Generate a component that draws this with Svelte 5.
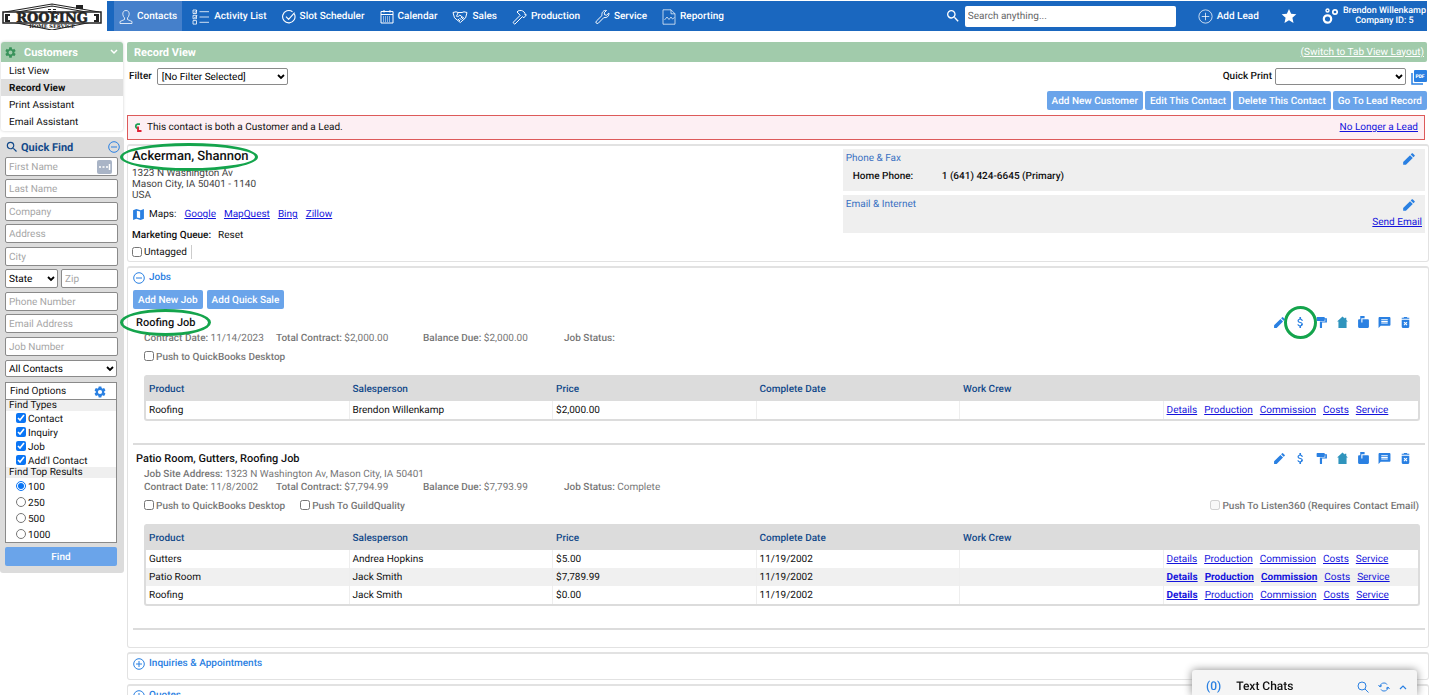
<script>
  const nav = [
    { id: 'contacts', label: 'Contacts', w: 14 },
    { id: 'activity', label: 'Activity List', w: 18 },
    { id: 'slot', label: 'Slot Scheduler', w: 14 },
    { id: 'calendar', label: 'Calendar', w: 14 },
    { id: 'sales', label: 'Sales', w: 16 },
    { id: 'production', label: 'Production', w: 15 },
    { id: 'service', label: 'Service', w: 15 },
    { id: 'reporting', label: 'Reporting', w: 14 },
  ]
  const menu = ['List View', 'Record View', 'Print Assistant', 'Email Assistant']
  const types = ['Contact', 'Inquiry', 'Job', "Add'l Contact"]
  const limits = ['100', '250', '500', '1000']
  const actions = ['Add New Customer', 'Edit This Contact', 'Delete This Contact', 'Go To Lead Record']
  const maps = ['Google', 'MapQuest', 'Bing', 'Zillow']
  const columns = ['Product', 'Salesperson', 'Price', 'Complete Date', 'Work Crew', '']
  const rowLinks = ['Details', 'Production', 'Commission', 'Costs', 'Service']
  const tools = ['edit', 'dollar', 'paint', 'house', 'mailbox', 'message', 'trash']

  const jobs = [
    {
      title: 'Roofing Job',
      address: '',
      meta: [['Contract Date', '11/14/2023'], ['Total Contract', '$2,000.00'], ['Balance Due', '$2,000.00'], ['Job Status', '']],
      pushes: ['Push to QuickBooks Desktop'],
      listen: false,
      marked: true,
      rows: [
        { cells: ['Roofing', 'Brendon Willenkamp', '$2,000.00', '', ''], strong: 0 },
      ],
    },
    {
      title: 'Patio Room, Gutters, Roofing Job',
      address: '1323 N Washington Av, Mason City, IA 50401',
      meta: [['Contract Date', '11/8/2002'], ['Total Contract', '$7,794.99'], ['Balance Due', '$7,793.99'], ['Job Status', 'Complete']],
      pushes: ['Push to QuickBooks Desktop', 'Push To GuildQuality'],
      listen: true,
      marked: false,
      rows: [
        { cells: ['Gutters', 'Andrea Hopkins', '$5.00', '11/19/2002', ''], strong: 0 },
        { cells: ['Patio Room', 'Jack Smith', '$7,789.99', '11/19/2002', ''], strong: 3 },
        { cells: ['Roofing', 'Jack Smith', '$0.00', '11/19/2002', ''], strong: 1 },
      ],
    },
  ]

  const glyphs = {
    edit: 'M2 17.250V22h4.750L18.500 10.200l-4.700-4.700L2 17.250zM21.700 7.040a1 1 0 0 0 0-1.410l-3.340-3.340a1 1 0 0 0-1.410 0l-2 2 4.700 4.700 2.050-1.950z',
    dollar: 'M11.8 10.9c-2.27-.59-3-1.2-3-2.15 0-1.09 1.01-1.85 2.7-1.85 1.78 0 2.44.85 2.5 2.1h2.21c-.07-1.72-1.12-3.3-3.21-3.81V2h-3v3.16c-1.94.42-3.5 1.68-3.5 3.61 0 2.31 1.91 3.46 4.7 4.13 2.5.6 3 1.48 3 2.41 0 .69-.49 1.79-2.7 1.79-2.06 0-2.87-.92-2.98-2.1h-2.2c.12 2.19 1.76 3.42 3.68 3.83V22h3v-3.15c1.95-.37 3.5-1.5 3.5-3.55 0-2.84-2.43-3.81-4.7-4.4z',
    paint: 'M18 4V3c0-.55-.45-1-1-1H4c-.55 0-1 .45-1 1v5c0 .55.45 1 1 1h13c.55 0 1-.45 1-1V6h1v4H9v11c0 .55.45 1 1 1h2c.55 0 1-.45 1-1v-9h9V4h-4z',
    house: 'M12 1L2 10h2.500v12h15V10H22l-3-2.700V3h-3v1.600z',
    mailbox: 'M20 6H10v6H8V4h6V0H6v6H4c-1.100 0-2 .9-2 2v12c0 1.100.9 2 2 2h16c1.100 0 2-.9 2-2V8c0-1.100-.9-2-2-2z',
    message: 'M21 2H3c-1.100 0-2 .9-2 2v18l4-4h16c1.100 0 2-.9 2-2V4c0-1.100-.9-2-2-2zm-3 12H6v-2h12v2zm0-3H6V9h12v2zm0-3H6V6h12v2z',
    trash: 'M5 19c0 1.700.9 3 2 3h10c1.100 0 2-1.300 2-3V7H5v12zm3.460-7.120l1.410-1.410L12 12.590l2.120-2.120 1.410 1.410L13.410 14l2.120 2.120-1.410 1.410L12 15.410l-2.120 2.120-1.410-1.410L10.590 14l-2.130-2.120zM15.500 3l-1-1h-5l-1 1H5v2h14V3z',
    gear: 'M19.14 12.94c.04-.3.06-.61.06-.94 0-.32-.02-.64-.07-.94l2.03-1.58c.18-.14.23-.41.12-.61l-1.92-3.32c-.12-.22-.37-.29-.59-.22l-2.39.96c-.5-.38-1.03-.7-1.62-.94l-.36-2.54c-.04-.24-.24-.41-.48-.41h-3.84c-.24 0-.43.17-.47.41l-.36 2.54c-.59.24-1.13.57-1.62.94l-2.39-.96c-.22-.08-.47 0-.59.22L2.74 8.87c-.12.21-.08.47.12.61l2.03 1.58c-.05.3-.09.63-.09.94s.02.64.07.94l-2.03 1.58c-.18.14-.23.41-.12.61l1.92 3.32c.12.22.37.29.59.22l2.39-.96c.5.38 1.03.7 1.62.94l.36 2.54c.05.24.24.41.48.41h3.84c.24 0 .44-.17.47-.41l.36-2.54c.59-.24 1.13-.56 1.62-.94l2.39.96c.22.08.47 0 .59-.22l1.92-3.32c.12-.22.07-.47-.12-.61l-2.01-1.58zM12 15.600a3.600 3.600 0 1 1 0-7.200 3.600 3.600 0 0 1 0 7.200z',
    search: 'M15.500 14h-.79l-.28-.27A6.471 6.471 0 0 0 16 9.500 6.500 6.500 0 1 0 9.500 16c1.610 0 3.090-.59 4.230-1.570l.27.28v.79l5 4.990L20.490 19l-4.990-5zm-6 0C7.010 14 5 11.990 5 9.500S7.010 5 9.500 5 14 7.010 14 9.500 11.990 14 9.500 14z',
    star: 'M12 1.500l3.200 7.200 7.800.8-5.900 5.200 1.700 7.700-6.800-4-6.800 4 1.700-7.700L1 9.500l7.800-.8z',
    map: 'M2 4l6-2 8 2 6-2v18l-6 2-8-2-6 2zM9 5v12.500l6 1.500V6.500z',
  }

  let limit = $state('100')
</script>

{#snippet glyph(name, size)}
  <svg class="glyph {name}" width={size} height={size} viewBox="0 0 24 24" fill="currentColor" aria-hidden="true">
    <path fill-rule="evenodd" d={glyphs[name]} />
  </svg>
{/snippet}

{#snippet circled(plus, size)}
  <svg class="glyph" width={size} height={size} viewBox="0 0 12 12" fill="none" stroke="currentColor" aria-hidden="true">
    <circle cx="6" cy="6" r="5.300" />
    <path d={plus ? 'M3 6h6M6 3v6' : 'M3 6h6'} />
  </svg>
{/snippet}

{#snippet navIcon(id, w)}
  <svg width={w} height="16" viewBox="0 0 {w} 16" fill="none" stroke="currentColor" stroke-linejoin="round" aria-hidden="true">
    {#if id === 'contacts'}
      <path d="M7 1.500c-2.300 0-3.300 1.700-3.200 3.700.1 1.600.8 2.800 1.700 3.700v1.600L1 12.500v2h12v-2l-4.500-2V8.900c.9-.9 1.600-2.100 1.700-3.700.1-2-.9-3.700-3.200-3.700z" stroke-width=".8" />
    {:else if id === 'activity'}
      <path d="M1 1h3.500v3.500H1zM1 6.300h3.500v3.500H1zM1 11.600h3.500v3.500H1zM2 2.500l1 1 2-2.500M2 7.800l1 1 2-2.500M7.500 2.700h9.500M7.500 8h9.500M7.500 13.300h9.500" stroke-width=".8" />
    {:else if id === 'slot'}
      <path d="M12.400 5A6.200 6.200 0 1 1 10.500 2.700M4 7.700l2.600 2.700 6-6.800" stroke-width="1.100" />
    {:else if id === 'calendar'}
      <path d="M1 2.500h12v11.500H1zM1 5.500h12M4 1v2.500M10 1v2.500" />
      <path d="M3 8h8M3 10h8M3 12h8" stroke-dasharray="1 1" />
    {:else if id === 'sales'}
      <path d="M1 3.500l3-.7 2 .7h4l2-.7 3 .7-1.400 5.300-5.300 4.700L2.500 8.800zM6 4L4.500 7.300c1.300.8 2.500 0 3.200-1.300l4.800 3.500M8 12l-2-2M9.500 11L7.500 9M11 10L9 8" stroke-width="1" />
    {:else if id === 'production'}
      <path d="M1 13.500l7.200-7.200L5 3l1-1c2.500-1 4.300-.7 6 1l1 1.200-.2 1.300 1.600.3-2.500 3-1.500-1.200-7.600 7.600z" stroke-width="1" />
    {:else if id === 'service'}
      <path d="M1.300 12.200l5.700-5.700c-.7-2.800 1.500-5.600 4.500-5l-2.300 2.300.4 2 2 .4L13.900 4c.6 3-2.200 5.200-5 4.500L3.300 14.200c-1.500 1-3.200-.6-2-2z" stroke-width="1" />
    {:else}
      <path d="M1 .8h8l4 4v10.400H1zM9 .8v4h4M2.500 11l2.500-3 2 2.500 2-2.500 1.500 2 2-1.500" stroke-width=".7" />
    {/if}
  </svg>
{/snippet}

<div class="app">
  <header>
    <a class="logo" href="#home" aria-label="Roofing Home Service">
      <svg width="100" height="27" viewBox="0 0 100 27" aria-hidden="true">
        <path d="M3 9L50 1l47 8M10 10L50 3l40 7" fill="none" stroke="#222" stroke-width="1.200" />
        <path d="M74 2h7v4h-7z" fill="#222" />
        <path d="M46 6h3v1h-3zM51 6h3v1h-3zM46 8h3v1h-3zM51 8h3v1h-3z" fill="#222" />
        <path d="M10 19L50 27l40-8" fill="none" stroke="#222" stroke-width="1.200" />
        <path d="M1 9h98v11H1z" fill="#fff" stroke="#222" stroke-width="1.500" />
        <path d="M3 11h5v2H6v4h2v2H3zM97 11h-5v2h2v4h-2v2h5z" fill="#222" />
        <text class="logo-name" x="50" y="19" text-anchor="middle">ROOFING</text>
        <text class="logo-sub" x="50" y="25" text-anchor="middle">HOME SERVICE</text>
      </svg>
    </a>
    <div class="topbar">
      <nav>
        {#each nav as item}
          <a href="#{item.id}" class:active={item.id === 'contacts'}>{@render navIcon(item.id, item.w)}{item.label}</a>
        {/each}
      </nav>
      <div class="search">
        {@render glyph('search', 16)}
        <input type="text" placeholder="Search anything..." aria-label="Search anything" />
      </div>
      <a class="add-lead" href="#lead">{@render circled(true, 15)}Add Lead</a>
      <a class="fav" href="#favorites" aria-label="Favorites">{@render glyph('star', 16)}</a>
      <a class="user" href="#account">
        <svg width="16" height="16" viewBox="0 0 16 16" fill="none" stroke="currentColor" aria-hidden="true">
          <circle cx="5.500" cy="11" r="3.700" stroke-width="2.200" />
          <circle cx="13" cy="4" r="2.200" stroke-width="1.700" />
          <circle cx="5.500" cy="2.500" r="1.500" stroke-width="1.400" />
        </svg>
        <span>Brendon Willenkamp<br />Company ID: 5</span>
      </a>
    </div>
  </header>

  <div class="body">
    <aside>
      <section class="menu">
        <h2>{@render glyph('gear', 13)}<span>Customers</span>
          <svg width="8" height="6" viewBox="0 0 8 6" fill="none" stroke="currentColor" stroke-width="1.500"><path d="M1 1l3 3 3-3" /></svg>
        </h2>
        {#each menu as item}
          <a href="#menu" class:current={item === 'Record View'}>{item}</a>
        {/each}
      </section>

      <form class="find" onsubmit={(e) => e.preventDefault()}>
        <h2>{@render glyph('search', 14)}<span>Quick Find</span>{@render circled(false, 12)}</h2>
        <div class="fields">
          <div class="first">
            <input type="text" placeholder="First Name" aria-label="First Name" />
            <svg width="15" height="14" viewBox="0 0 15 14" aria-hidden="true">
              <rect width="15" height="14" rx="2" fill="#a9b4c6" />
              <path d="M2 7h2M5.500 7h2M9 7h2M12.500 4v6" stroke="#fff" stroke-width="1.500" />
            </svg>
          </div>
          <input type="text" placeholder="Last Name" aria-label="Last Name" />
          <input type="text" placeholder="Company" aria-label="Company" />
          <input type="text" placeholder="Address" aria-label="Address" />
          <input type="text" placeholder="City" aria-label="City" />
          <div class="pair">
            <select aria-label="State"><option>State</option></select>
            <input type="text" placeholder="Zip" aria-label="Zip" />
          </div>
          <input type="text" placeholder="Phone Number" aria-label="Phone Number" />
          <input type="text" placeholder="Email Address" aria-label="Email Address" />
          <input type="text" placeholder="Job Number" aria-label="Job Number" />
          <select class="scope" aria-label="Contact scope"><option>All Contacts</option></select>
        </div>
        <div class="options">
          <div class="options-head">Find Options {@render glyph('gear', 14)}</div>
          <h3>Find Types</h3>
          {#each types as type}
            <label class="tick"><input type="checkbox" checked />{type}</label>
          {/each}
          <h3>Find Top Results</h3>
          {#each limits as value}
            <label class="pick"><input type="radio" name="limit" {value} bind:group={limit} />{value}</label>
          {/each}
        </div>
        <button class="btn">Find</button>
      </form>
    </aside>

    <main>
      <div class="title-bar">
        <h1>Record View</h1>
        <a href="#tabs">(Switch to Tab View Layout)</a>
      </div>

      <div class="filters">
        <label for="filter">Filter</label>
        <select id="filter"><option>[No Filter Selected]</option></select>
        <label class="print" for="print">Quick Print</label>
        <select id="print"><option></option></select>
        <svg width="16" height="16" viewBox="0 0 16 16" aria-hidden="true">
          <path d="M1 4v11h11" fill="none" stroke="#2a80e2" stroke-width="1.500" />
          <rect x="3" y="1" width="13" height="12" rx="1" fill="#2a80e2" />
          <text class="pdf" x="9" y="9" text-anchor="middle">PDF</text>
        </svg>
      </div>

      <div class="actions">
        {#each actions as action}
          <button class="btn">{action}</button>
        {/each}
      </div>

      <div class="alert">
        <svg width="8" height="9" viewBox="0 0 8 9" fill="none" stroke-width="1.800" aria-hidden="true">
          <path d="M6 1.200H3.500a2.200 2.200 0 0 0 0 4.300H5" stroke="#1e9e55" />
          <path d="M4 3.500v4.500h3.500" stroke="#e02035" />
        </svg>
        <span>This contact is both a Customer and a Lead.</span>
        <a href="#lead">No Longer a Lead</a>
      </div>

      <section class="panel contact">
        <div class="who">
          <h2><span class="mark">Ackerman, Shannon<i class="ring"></i></span></h2>
          <address>1323 N Washington Av<br />Mason City, IA 50401 - 1140<br />USA</address>
          <div class="maps">{@render glyph('map', 13)}Maps:
            {#each maps as site}<a href="#map">{site}</a>{/each}
          </div>
          <div class="queue"><b>Marketing Queue:</b>Reset</div>
          <label class="untagged"><input type="checkbox" />Untagged</label>
        </div>
        <div class="reach">
          <div class="box">
            <h3>Phone &amp; Fax {@render glyph('edit', 14)}</h3>
            <dl><dt>Home Phone:</dt><dd>1 (641) 424-6645 (Primary)</dd></dl>
          </div>
          <div class="box">
            <h3>Email &amp; Internet {@render glyph('edit', 14)}</h3>
            <a href="#email">Send Email</a>
          </div>
        </div>
      </section>

      <section class="panel jobs">
        <h2 class="fold">{@render circled(false, 12)}Jobs</h2>
        <div class="job-actions">
          <button class="btn">Add New Job</button>
          <button class="btn">Add Quick Sale</button>
        </div>
        {#each jobs as job}
          <article>
            <div class="job-head">
              <h3><span class="mark">{job.title}{#if job.marked}<i class="ring wide"></i>{/if}</span></h3>
              <div class="tools">
                {#each tools as tool}
                  <button aria-label={tool}>{@render glyph(tool, 13)}{#if job.marked && tool === 'dollar'}<i class="ring round"></i>{/if}</button>
                {/each}
              </div>
            </div>
            {#if job.address}
              <p class="site"><b>Job Site Address:</b> {job.address}</p>
            {/if}
            <div class="meta">
              {#each job.meta as [name, value]}<span><b>{name}:</b> {value}</span>{/each}
            </div>
            <div class="pushes">
              {#each job.pushes as push}
                <label><input type="checkbox" />{push}</label>
              {/each}
              {#if job.listen}
                <label class="listen"><input type="checkbox" disabled />Push To Listen360 (Requires Contact Email)</label>
              {/if}
            </div>
            <table>
              <thead>
                <tr>{#each columns as col}<th>{col}</th>{/each}</tr>
              </thead>
              <tbody>
                {#each job.rows as row}
                  <tr>
                    {#each row.cells as cell}<td>{cell}</td>{/each}
                    <td class="links">
                      {#each rowLinks as link, i}<a href="#row" class:strong={i < row.strong}>{link}</a>{/each}
                    </td>
                  </tr>
                {/each}
              </tbody>
            </table>
          </article>
        {/each}
      </section>

      <section class="panel closed"><h2 class="fold">{@render circled(true, 12)}Inquiries &amp; Appointments</h2></section>
      <section class="panel closed"><h2 class="fold">{@render circled(true, 12)}Quotes</h2></section>
    </main>
  </div>

  <div class="chats">
    <span class="count">(0)</span>
    <span class="name">Text Chats</span>
    <svg width="12" height="12" viewBox="0 0 12 12" fill="none" stroke="currentColor"><circle cx="5" cy="5" r="4" /><path d="M8 8l3.500 3.500" /></svg>
    <svg width="12" height="12" viewBox="0 0 12 12" fill="none" stroke="currentColor"><path d="M2 5.500C2.500 3 4 2 6 2c1.500 0 2.500.6 3 1.500M10 6.500C9.500 9 8 10 6 10c-1.500 0-2.500-.6-3-1.500M.5 4L2 6l2-1.500M11.500 8L10 6 8 7.500" /></svg>
    <svg width="8" height="6" viewBox="0 0 8 6" fill="none" stroke="currentColor" stroke-width="1.200"><path d="M1 5l3-3 3 3" /></svg>
  </div>
</div>

<style>
  :global(body) { margin: 0; background: #fff; }
  .app { height: 100vh; overflow: hidden; font: 10px/13px Roboto, sans-serif; color: #111; text-rendering: geometricPrecision; }
  .app *, .app *::before { box-sizing: border-box; }
  h1, h2, h3, p, dl, dd { margin: 0; font-size: inherit; font-weight: 500; }
  b, dt { font-weight: 500; }
  svg { display: block; flex: none; }
  a { color: #1414dc; }
  input, select, button { font: inherit; color: inherit; margin: 0; text-rendering: inherit; }
  input[type='text'], select { background: #fff; border: 1px solid #8a8a8a; border-radius: 2px; min-width: 0; }
  input::placeholder { color: #a6a6a6; opacity: 1; }
  input[type='checkbox'], input[type='radio'] { width: 10px; height: 10px; flex: none; accent-color: #0a75f5; }
  select { appearance: none; padding: 1px 16px 0 4px; color: #000;
           background: #fff url("data:image/svg+xml,%3Csvg xmlns='http://www.w3.org/2000/svg' width='8' height='6' fill='none' stroke='%23000' stroke-width='1.8'%3E%3Cpath d='M1 1l3 3 3-3'/%3E%3C/svg%3E") no-repeat right 2px center; }
  .btn { height: 19px; padding: 1px 5px 0; border: 0; border-radius: 2px; background: #6aa4ea; color: #fff; font-weight: 500; }

  header { display: flex; height: 31px; padding: 1px 2px 0 0; }
  .logo { width: 107px; padding: 2px 2px; }
  .logo-name { font: bold 13px 'DejaVu Serif', serif; fill: #222; stroke: #222; stroke-width: .5px; }
  .logo-sub { font: bold 5px 'DejaVu Serif', serif; fill: #222; }
  .topbar { flex: 1; display: flex; align-items: center; background: #1a67bf; color: #fff; padding: 0 1px 0 7px; }
  .topbar a { color: #fff; text-decoration: none; font-weight: 500; }
  nav { display: flex; align-self: stretch; gap: 5px; flex: 1; }
  nav a { display: flex; align-items: center; gap: 4px; padding: 1px 5px 0; }
  nav a.active { background: #4580cb; }
  .search { display: flex; align-items: center; gap: 4px; }
  .search input { width: 211px; height: 21px; border: 0; padding: 0 3px; color: #333; }
  .search input::placeholder { color: #666; }
  .add-lead { display: flex; align-items: center; gap: 4px; margin: 0 22px; padding-top: 1px; }
  .add-lead .glyph { stroke-width: .6px; }
  .user { display: flex; align-items: center; gap: 5px; margin-left: 25px; font-size: 9px; line-height: 10px; text-align: center; }

  .body { display: flex; gap: 3px; padding-top: 11px; }
  aside { width: 124px; flex: none; }
  .menu { margin-left: 1px; padding-bottom: 1px; border-radius: 3px; box-shadow: 0 0 3px #ccc; width: 122px; }
  .menu h2 { display: flex; align-items: center; height: 20px; padding: 0 5px 0 3px; gap: 7px; background: #a1cbab; color: #fff; border-radius: 3px 3px 0 0; font-size: 11px; font-weight: 700; }
  .menu h2 span { flex: 1; }
  .menu .gear { color: #38925a; }
  .menu a { display: block; height: 17px; padding: 0 8px; line-height: 19px; color: #111; text-decoration: none; }
  .menu .current { background: #dedede; font-weight: 700; }

  .find { display: flex; flex-direction: column; margin-top: 6px; padding: 0 6px 7px 5px; border-radius: 3px; background: #dcdcdc; }
  .find h2 { display: flex; align-items: center; gap: 2px; height: 20px; margin-right: -2px; font-size: 11px; font-weight: 700; color: #12498a; }
  .find h2 span { flex: 1; }
  .find h2 .glyph:last-child { color: #2a80e2; }
  .fields { display: grid; grid-auto-rows: 22px 23px; align-items: start; }
  .fields input, .fields select { height: 19px; width: 100%; padding: 1px 0 0 3px; }
  .fields .scope { height: 17px; width: 112px; margin-top: 1px; }
  .first { position: relative; }
  .first svg { position: absolute; right: 6px; top: 3px; }
  .pair { display: grid; grid-template-columns: 53px 57px; gap: 3px; }
  .options { width: 112px; margin-bottom: 4px; background: #fff; border: 1px solid #8a8a8a; }
  .options-head { display: flex; align-items: center; justify-content: space-between; height: 17px; padding: 1px 9px 0 4px; border-bottom: 1px solid #8a8a8a; }
  .options .gear { color: #2a80e2; }
  .options h3 { padding-left: 3px; background: #efefef; font-weight: 400; line-height: 11px; }
  .options label { display: flex; align-items: center; gap: 2px; padding: 2px 0 0 10px; height: 14px; line-height: 15px; }
  .options input { margin-bottom: 2px; }
  .options .pick { height: 16px; }
  .find .btn { width: 112px; }

  main { flex: 1; min-width: 0; }
  .title-bar { display: flex; align-items: center; justify-content: space-between; height: 20px; margin-right: 2px; padding: 0 3px 0 7px; border-radius: 2px; background: #a1cbab; }
  .title-bar h1 { font-size: 11px; font-weight: 700; color: #fff; }
  .title-bar a { color: #fff; }
  .filters { display: flex; align-items: center; gap: 5px; padding: 1px 2px 0 2px; height: 28px; }
  .filters select { width: 131px; height: 17px; }
  .filters label { font-weight: 500; }
  .filters .print { margin-left: auto; margin-right: -2px; }
  .pdf { font: 900 5px Roboto, sans-serif; fill: #fff; }
  .actions { display: flex; justify-content: flex-end; gap: 2px; padding: 1px 2px 5px 0; }
  .alert { display: flex; align-items: center; gap: 5px; height: 25px; margin: 0 4px 4px 0; padding: 0 6px; border: 1px solid #dd5a5a; background: #fdeff3; }
  .alert span { flex: 1; }

  .panel { border: 1px solid #e2e2e2; border-top-width: 2px; border-radius: 3px; margin-bottom: 4px; }
  .contact { display: flex; gap: 12px; height: 118px; padding-right: 3px; }
  .who { flex: 6; padding-left: 4px; }
  .who h2 { font-size: 13px; line-height: 22px; }
  address { font-style: normal; line-height: 11px; color: #444; }
  .mark { position: relative; display: inline-block; }
  .ring { position: absolute; inset: -3px -9px -3px -12px; border: 3px solid #14a44c; border-radius: 50%; z-index: 2; }
  .ring.wide { inset: -4px -16px -3px; }
  .ring.round { inset: -10px; }
  .maps { display: flex; gap: 8px; line-height: 14px; margin-top: 7px; }
  .maps svg { margin-right: -4px; color: #2a80e2; }
  .queue { display: flex; gap: 7px; margin-top: 7px; }
  .untagged { display: inline-flex; align-items: center; gap: 2px; height: 14px; margin-top: 3px; padding-right: 4px; border-right: 1px solid #ccc; }
  .reach { flex: 5; display: flex; flex-direction: column; gap: 4px; padding-top: 3px; }
  .box { height: 42px; padding: 3px 3px 0; background: #efefef; }
  .box + .box { height: 38px; text-align: right; }
  .box h3 { display: flex; justify-content: space-between; font-weight: 400; color: #3a71c2; height: 18px; padding-right: 6px; }
  .box .edit { color: #2a80e2; }
  dl { display: grid; grid-template-columns: 89px 1fr; padding-left: 7px; }

  .jobs { height: 382px; padding: 0 3px 0 5px; }
  .fold { display: flex; align-items: center; gap: 4px; height: 19px; color: #2a80e2; }
  .job-actions { display: flex; gap: 4px; padding: 3px 0 4px; }
  article { padding-bottom: 22px; margin-bottom: 4px; border-bottom: 2px solid #dcdcdc; }
  .job-head { display: flex; justify-content: space-between; padding: 0 13px 0 3px; height: 19px; }
  .job-head h3 { font-size: 11px; line-height: 20px; }
  .tools { display: flex; align-items: center; gap: 8px; color: #2a80e2; }
  .tools button { position: relative; border: 0; padding: 0; background: none; }
  .house { color: #2f94bd; }
  .site, .meta, .pushes { padding-left: 11px; color: #777; }
  .site { line-height: 13px; font-weight: 400; }
  .meta { display: grid; grid-template-columns: 132px 147px 141px 1fr; line-height: 13px; }
  .pushes { display: flex; gap: 15px; margin: 6px 6px 11px 0; line-height: 14px; height: 13px; font-weight: 500; }
  .pushes label { display: flex; gap: 2px; }
  .listen { margin-left: auto; }
  table { width: calc(100% - 16px); margin-left: 11px; table-layout: fixed; border-collapse: separate; border-spacing: 0; border: 2px solid #dcdcdc; border-top: 0; border-radius: 3px; }
  th { width: 16%; height: 26px; padding: 2px 3px 0; background: #dcdcdc; color: #12498a; text-align: left; font-weight: 500; }
  th:last-child { width: 20%; }
  td { height: 18px; padding: 1px 3px 0; border-right: 1px solid #eee; }
  td:last-child { border-right: 0; }
  tbody tr:nth-child(even) { background: #f0f0f0; }
  .links { white-space: nowrap; }
  .links a + a { margin-left: 7px; }
  .strong { font-weight: 700; }
  .closed { height: 28px; padding: 0 5px; }

  .chats { position: fixed; right: 12px; bottom: 0; z-index: 3; display: flex; align-items: center; gap: 9px; width: 225px; height: 25px; padding: 8px 10px 0 14px; border-radius: 3px 3px 0 0; background: #f5f5f5; box-shadow: 0 0 8px #888; color: #2a80e2; font-size: 12px; font-weight: 500; }
  .chats .name { flex: 1; padding-left: 6px; color: #111; }
</style>
